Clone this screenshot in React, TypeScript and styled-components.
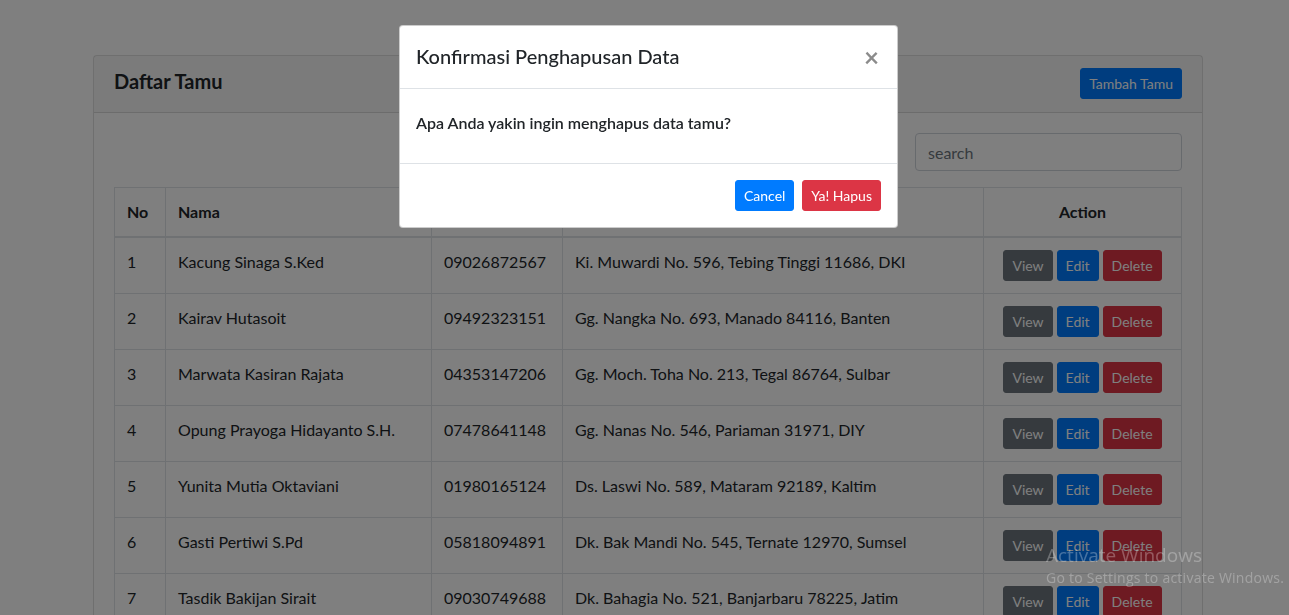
import React from 'react';
import styled, { createGlobalStyle } from 'styled-components';

const GlobalStyle = createGlobalStyle`
  * { box-sizing: border-box; }
  html, body { margin: 0; padding: 0; background: #fff; }
  body {
    font-family: Lato, "Open Sans", "Liberation Sans", sans-serif;
    font-size: 16px;
    line-height: 1.5;
    color: #212529;
    overflow: hidden;
  }
`;

const Page = styled.div`
  padding-top: 55px;
  min-height: 615px;
`;

const Card = styled.div`
  width: 1110px;
  margin-left: calc(50% - 551.5px);
  border: 1px solid rgba(0, 0, 0, 0.125);
  border-radius: 4px;
  background: #fff;
`;

const CardHeader = styled.div`
  display: flex;
  justify-content: space-between;
  align-items: flex-start;
  padding: 12px 20px 13px;
  background: rgba(0, 0, 0, 0.03);
  border-bottom: 1px solid rgba(0, 0, 0, 0.125);
`;

const CardTitle = styled.h5`
  margin: 0;
  font-size: 20px;
  font-weight: 700;
  line-height: 26px;
`;

const CardBody = styled.div`
  padding: 20px;
`;

const SearchRow = styled.div`
  display: flex;
  justify-content: flex-end;
  margin-bottom: 16px;
`;

const SearchInput = styled.input`
  width: 267px;
  height: 38px;
  padding: 6px 12px;
  font: inherit;
  color: #495057;
  border: 1px solid #ced4da;
  border-radius: 4px;
  background: #fff;
  &::placeholder { color: #6c757d; }
`;

const Btn = styled.button<{ $variant: 'primary' | 'danger' | 'secondary' }>`
  display: inline-block;
  height: 31px;
  padding: 4px 8px;
  font-family: inherit;
  font-size: 14px;
  line-height: 21px;
  border-radius: 3px;
  border: 1px solid transparent;
  color: #fff;
  cursor: pointer;
  background: ${({ $variant }) =>
    $variant === 'primary' ? '#007bff' : $variant === 'danger' ? '#dc3545' : '#6c757d'};
  border-color: ${({ $variant }) =>
    $variant === 'primary' ? '#007bff' : $variant === 'danger' ? '#dc3545' : '#6c757d'};
`;

const Table = styled.table`
  width: 100%;
  border-collapse: collapse;
  color: #212529;
`;

const Th = styled.th<{ $w?: number; $center?: boolean }>`
  width: ${({ $w }) => ($w ? `${$w}px` : 'auto')};
  padding: 12px;
  text-align: ${({ $center }) => ($center ? 'center' : 'left')};
  vertical-align: bottom;
  font-weight: 700;
  border: 1px solid #dee2e6;
  border-bottom-width: 2px;
`;

const Td = styled.td<{ $center?: boolean }>`
  padding: 12px;
  vertical-align: top;
  text-align: ${({ $center }) => ($center ? 'center' : 'left')};
  border: 1px solid #dee2e6;
`;

const Actions = styled.div`
  display: flex;
  justify-content: center;
  gap: 4px;
`;

const Backdrop = styled.div`
  position: fixed;
  inset: 0;
  background: rgba(0, 0, 0, 0.5);
`;

const Modal = styled.div`
  position: fixed;
  top: 25px;
  left: calc(50% - 245.5px);
  width: 499px;
  background: #fff;
  border: 1px solid rgba(0, 0, 0, 0.2);
  border-radius: 4px;
`;

const ModalHeader = styled.div`
  display: flex;
  justify-content: space-between;
  align-items: center;
  padding: 16px;
  border-bottom: 1px solid #dee2e6;
`;

const ModalTitle = styled.h5`
  margin: 0;
  font-size: 20px;
  font-weight: 500;
  line-height: 30px;
  position: relative;
  top: -1px;
`;

const CloseBtn = styled.button`
  border: 0;
  background: transparent;
  padding: 0;
  margin-right: 2px;
  font-family: Lato, sans-serif;
  font-size: 26px;
  font-weight: 700;
  line-height: 1;
  color: #000;
  opacity: 0.45;
`;

const ModalBody = styled.div`
  padding: 22px 16px 28px;
  font-weight: 600;
`;

const ModalFooter = styled.div`
  display: flex;
  justify-content: flex-end;
  gap: 8px;
  padding: 16px;
  border-top: 1px solid #dee2e6;
`;

const Watermark = styled.div`
  position: fixed;
  left: 1046px;
  top: 542px;
  color: rgba(255, 255, 255, 0.28);
  font-family: "Open Sans", sans-serif;
  white-space: nowrap;
`;

const WmTitle = styled.div`
  font-size: 19px;
  line-height: 26px;
`;

const WmSub = styled.div`
  font-size: 14px;
  line-height: 20px;
  letter-spacing: 0.25px;
`;

const rows = [
  ['Kacung Sinaga S.Ked', '09026872567', 'Ki. Muwardi No. 596, Tebing Tinggi 11686, DKI'],
  ['Kairav Hutasoit', '09492323151', 'Gg. Nangka No. 693, Manado 84116, Banten'],
  ['Marwata Kasiran Rajata', '04353147206', 'Gg. Moch. Toha No. 213, Tegal 86764, Sulbar'],
  ['Opung Prayoga Hidayanto S.H.', '07478641148', 'Gg. Nanas No. 546, Pariaman 31971, DIY'],
  ['Yunita Mutia Oktaviani', '01980165124', 'Ds. Laswi No. 589, Mataram 92189, Kaltim'],
  ['Gasti Pertiwi S.Pd', '05818094891', 'Dk. Bak Mandi No. 545, Ternate 12970, Sumsel'],
  ['Tasdik Bakijan Sirait', '09030749688', 'Dk. Bahagia No. 521, Banjarbaru 78225, Jatim'],
  ['Rina Handayani', '08123456789', 'Jl. Merdeka No. 12, Bandung 40111, Jabar'],
];

export default function App() {
  return (
    <>
      <GlobalStyle />
      <Page>
        <Card>
          <CardHeader>
            <CardTitle>Daftar Tamu</CardTitle>
            <Btn $variant="primary">Tambah Tamu</Btn>
          </CardHeader>
          <CardBody>
            <SearchRow>
              <SearchInput placeholder="search" />
            </SearchRow>
            <Table>
              <thead>
                <tr>
                  <Th $w={51}>No</Th>
                  <Th $w={266}>Nama</Th>
                  <Th $w={131}>No HP</Th>
                  <Th $w={421}>Alamat</Th>
                  <Th $center>Action</Th>
                </tr>
              </thead>
              <tbody>
                {rows.map((r, i) => (
                  <tr key={i}>
                    <Td>{i + 1}</Td>
                    <Td>{r[0]}</Td>
                    <Td>{r[1]}</Td>
                    <Td>{r[2]}</Td>
                    <Td $center>
                      <Actions>
                        <Btn $variant="secondary">View</Btn>
                        <Btn $variant="primary">Edit</Btn>
                        <Btn $variant="danger">Delete</Btn>
                      </Actions>
                    </Td>
                  </tr>
                ))}
              </tbody>
            </Table>
          </CardBody>
        </Card>
      </Page>
      <Backdrop />
      <Modal>
        <ModalHeader>
          <ModalTitle>Konfirmasi Penghapusan Data</ModalTitle>
          <CloseBtn aria-label="Close">×</CloseBtn>
        </ModalHeader>
        <ModalBody>Apa Anda yakin ingin menghapus data tamu?</ModalBody>
        <ModalFooter>
          <Btn $variant="primary">Cancel</Btn>
          <Btn $variant="danger">Ya! Hapus</Btn>
        </ModalFooter>
      </Modal>
      <Watermark>
        <WmTitle>Activate Windows</WmTitle>
        <WmSub>Go to Settings to activate Windows.</WmSub>
      </Watermark>
    </>
  );
}
